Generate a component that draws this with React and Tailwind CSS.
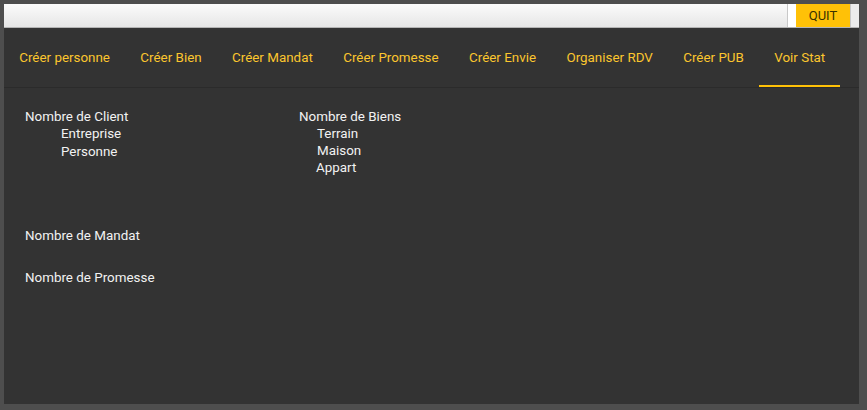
const TABS = [
  'Créer personne',
  'Créer Bien',
  'Créer Mandat',
  'Créer Promesse',
  'Créer Envie',
  'Organiser RDV',
  'Créer PUB',
  'Voir Stat',
]

export default function App() {
  const active = 'Voir Stat'

  return (
    <div
      className="w-[867px] h-[410px] bg-[#4e4e4e] pl-[4px] pt-[4px] pr-[8px] pb-[6px] flex flex-col"
      style={{ fontFamily: 'Roboto, "Liberation Sans", sans-serif' }}
    >
      {/* ── Top bar ── */}
      <div className="h-[24px] flex justify-end bg-gradient-to-b from-[#fbfbfb] to-[#e6e6e6] border-b border-[#b4b4b4]">
        <div className="w-[9px] bg-white border-l border-[#c8c8c8]" />
        <button className="w-[54px] bg-[#ffc107] text-[13px] text-[#3a3000] leading-none">
          QUIT
        </button>
        <div className="w-[9px] bg-[#ececec] border-l border-[#c8c8c8]" />
      </div>

      {/* ── Main panel ── */}
      <div className="flex-1 bg-[#333333] flex flex-col">
        {/* Tabs */}
        <div className="h-[60px] flex items-stretch border-b border-[#2b2b2b]">
          {TABS.map((tab) => (
            <div
              key={tab}
              className={`px-[15.2px] pt-[3px] flex items-center text-[13.4px] text-[#fcc62e] ${tab === active ? 'border-b-[2px] border-[#ffc107]' : 'border-b-[2px] border-transparent'}`}
            >
              {tab}
            </div>
          ))}
        </div>

        {/* Stats */}
        <div className="pl-[21px] pt-[20px] text-[13.4px] leading-[17px] text-[#f2f2f2]">
          <div className="flex">
            <div className="w-[274px]">
              <div>Nombre de Client</div>
              <div className="pl-[36px]">Entreprise</div>
              <div className="pl-[36px] mt-[1px]">Personne</div>
            </div>
            <div>
              <div>Nombre de Biens</div>
              <div className="pl-[18px]">Terrain</div>
              <div className="pl-[18px]">Maison</div>
              <div className="pl-[17px]">Appart</div>
            </div>
          </div>
          <div className="mt-[51px]">Nombre de Mandat</div>
          <div className="mt-[25px]">Nombre de Promesse</div>
        </div>
      </div>
    </div>
  )
}
